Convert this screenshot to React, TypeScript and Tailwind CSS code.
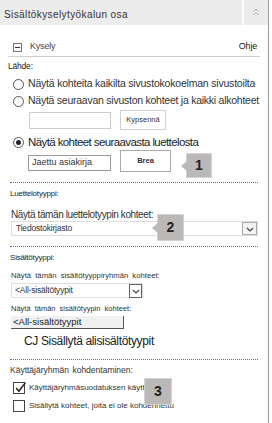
import React from 'react'

const font = { fontFamily: '"Liberation Sans", Arial, sans-serif' }

function Callout({ n, className, arrow = true }: { n: string; className: string; arrow?: boolean }) {
    return (
        <div className={`absolute ${className}`}>
            <div className="relative w-full h-full bg-[#bbb8b8] border border-[#d4d2d2] flex items-center justify-center text-[14px] font-bold text-[#222]">
                {n}
                {arrow && (
                    <span className="absolute left-[-6px] top-1/2 -translate-y-1/2 w-0 h-0 border-y-[5px] border-y-transparent border-r-[6px] border-r-[#bbb8b8]" />
                )}
            </div>
        </div>
    )
}

function Radio({ checked = false }: { checked?: boolean }) {
    return (
        <span className="w-[11px] h-[11px] rounded-full border border-[#555] bg-white flex items-center justify-center shrink-0">
            {checked && <span className="w-[5px] h-[5px] rounded-full bg-[#222]" />}
        </span>
    )
}

function Checkbox({ checked = false }: { checked?: boolean }) {
    return (
        <span className="w-[12px] h-[12px] border border-[#444] bg-white relative shrink-0">
            {checked && (
                <svg viewBox="0 0 12 12" className="absolute left-[0px] top-[-2px] w-[13px] h-[13px]">
                    <path d="M2 6.5 L4.5 9.5 L10.5 1.5" fill="none" stroke="#222" strokeWidth="1.4" />
                </svg>
            )}
        </span>
    )
}

function Divider({ className }: { className: string }) {
    return <div className={`mx-[10px] border-t border-dotted border-[#4a6fd0] ${className}`} />
}

function Chevron() {
    return (
        <svg viewBox="0 0 10 10" className="w-[10px] h-[10px]">
            <path d="M2 4 L5 7 L8 4" fill="none" stroke="#444" strokeWidth="1.2" />
        </svg>
    )
}

export default function App() {
    return (
        <div className="w-[272px] h-[423px] bg-white overflow-hidden text-[#222] whitespace-nowrap" style={font}>
            <div className="relative w-[269px] h-full border-r border-[#9a9a9a] flex flex-col">
                {/* header */}
                <div className="flex h-[25px] shrink-0 bg-[#ececec]">
                    <div className="flex-1 flex items-center pl-[4px] pt-[3px] text-[10px] text-[#333] tracking-[0.4px]">
                        Sisältökyselytyökalun osa
                    </div>
                    <div className="w-[26px] border-l-2 border-white flex items-start justify-center pt-[8px]">
                        <svg viewBox="0 0 8 8" className="w-[8px] h-[8px]">
                            <path d="M1.5 3.5 L4 1 L6.5 3.5 M1.5 7 L4 4.5 L6.5 7" fill="none" stroke="#aaa" strokeWidth="1" />
                        </svg>
                    </div>
                </div>

                {/* Kysely row */}
                <div className="mt-[13px] mx-[8px] h-[19px] shrink-0 flex items-center border-b border-[#cfcfcf]">
                    <span className="ml-[5px] w-[9px] h-[9px] border border-[#777] flex items-center justify-center">
                        <span className="w-[5px] h-px bg-[#333]" />
                    </span>
                    <span className="ml-[8px] text-[9px] text-[#444] tracking-[-0.2px]">Kysely</span>
                    <span className="ml-auto mr-[3px] text-[9px] text-[#222] tracking-[-0.2px]">Ohje</span>
                </div>

                <div className="mt-[3px] h-[12px] leading-[12px] ml-[8px] text-[8.5px] tracking-[-0.2px]">Lähde:</div>

                <div className="mt-[4px] h-[16px] ml-[13px] flex items-center gap-[4px] text-[10.5px] tracking-[-0.2px] text-[#333]">
                    <Radio />
                    <span>Näytä kohteita kaikilta sivustokokoelman sivustoilta</span>
                </div>
                <div className="mt-[1px] h-[16px] ml-[13px] flex items-center gap-[4px] text-[10.5px] tracking-[-0.25px] text-[#333]">
                    <Radio />
                    <span>Näytä seuraavan sivuston kohteet ja kaikki alkohteet</span>
                </div>
                <div className="mt-[1px] h-[20px] ml-[29px] flex items-center gap-[9px]">
                    <div className="w-[82px] h-[17px] border border-[#ccc]" />
                    <div className="w-[46px] h-[20px] border border-[#d0d0d0] flex items-center justify-center text-[7.5px] text-[#333]">
                        Kypsennä
                    </div>
                </div>

                <div className="mt-[5px] h-[15px] ml-[13px] flex items-center gap-[4px] text-[11.5px] tracking-[-0.6px] text-[#222]">
                    <Radio checked />
                    <span>Näytä kohteet seuraavasta luettelosta</span>
                </div>
                <div className="h-[22px] ml-[28px] flex items-center gap-[9px]">
                    <div className="w-[83px] h-[16px] mt-[3px] border border-[#999] flex items-center pl-[3px] text-[9px] text-[#333]">
                        Jaettu asiakirja
                    </div>
                    <div className="w-[51px] h-[22px] border border-[#aaa] flex items-center justify-center text-[7.5px] font-bold text-[#333]">
                        Brea
                    </div>
                </div>

                <Divider className="mt-[10px]" />
                <div className="mt-[5px] h-[12px] leading-[12px] ml-[10px] text-[8px] tracking-[-0.2px]">Luettelotyyppi:</div>

                <div className="mt-[8px] h-[13px] leading-[13px] ml-[11px] text-[10px] tracking-[-0.4px] text-[#333]">Näytä tämän luettelotyypin kohteet:</div>
                <div className="ml-[11px] w-[247px] h-[15px] shrink-0 border border-[#ddd] flex items-center">
                    <span className="pl-[4px] text-[8.5px] text-[#333] tracking-[-0.2px]">Tiedostokirjasto</span>
                    <span className="ml-auto w-[15px] h-[13px] border border-[#aaa] bg-[#f4f4f4] flex items-center justify-center">
                        <Chevron />
                    </span>
                </div>

                <Divider className="mt-[10px]" />
                <div className="mt-[5px] h-[12px] leading-[12px] ml-[10px] text-[8px] tracking-[-0.2px]">Sisältötyyppi:</div>

                <div className="mt-[6px] h-[12px] leading-[12px] ml-[11px] text-[7.7px] [word-spacing:2px] text-[#333]">Näytä tämän sisältötyyppiryhmän kohteet:</div>
                <div className="mt-[1px] ml-[11px] w-[132px] h-[15px] shrink-0 border border-[#ddd] flex items-center">
                    <span className="pl-[3px] text-[8.5px] text-[#333] tracking-[-0.2px]">&lt;All-sisältötyypit</span>
                    <span className="ml-auto w-[13px] h-[14px] border border-[#666] bg-white flex items-center justify-center">
                        <Chevron />
                    </span>
                </div>

                <div className="mt-[5px] h-[12px] leading-[12px] ml-[11px] text-[7.5px] [word-spacing:2px] text-[#333]">Näytä tämän sisältötyypin kohteet:</div>
                <div className="mt-[1px] ml-[11px] w-[113px] h-[13px] shrink-0 bg-[#f0f0f0] border-r border-b border-[#555] flex items-center">
                    <span className="pl-[2px] text-[9.5px] text-[#222]">&lt;All-sisältötyypit</span>
                </div>

                <div className="mt-[4px] h-[16px] leading-[16px] ml-[24px] text-[12px] tracking-[-0.35px] text-[#222]">CJ Sisällytä alisisältötyypit</div>

                <Divider className="mt-[10px]" />
                <div className="mt-[4px] h-[12px] leading-[12px] ml-[10px] text-[8.5px] [word-spacing:1px] text-[#333]">Käyttäjäryhmän kohdentaminen:</div>

                <div className="mt-[5px] h-[14px] ml-[13px] flex items-center gap-[4px] text-[8px] text-[#333]">
                    <Checkbox checked />
                    <span>Käyttäjäryhmäsuodatuksen käyttäminen</span>
                </div>
                <div className="mt-[4px] h-[14px] ml-[13px] flex items-center gap-[4px] text-[8px] text-[#333]">
                    <Checkbox />
                    <span>Sisällytä kohteet, joita ei ole kohdennettu</span>
                </div>

                <Callout n="1" className="left-[186px] top-[153px] w-[26px] h-[25px]" />
                <Callout n="2" className="left-[157px] top-[214px] w-[27px] h-[27px]" />
                <Callout n="3" arrow={false} className="left-[144px] top-[378px] w-[28px] h-[27px]" />
            </div>
        </div>
    )
}
